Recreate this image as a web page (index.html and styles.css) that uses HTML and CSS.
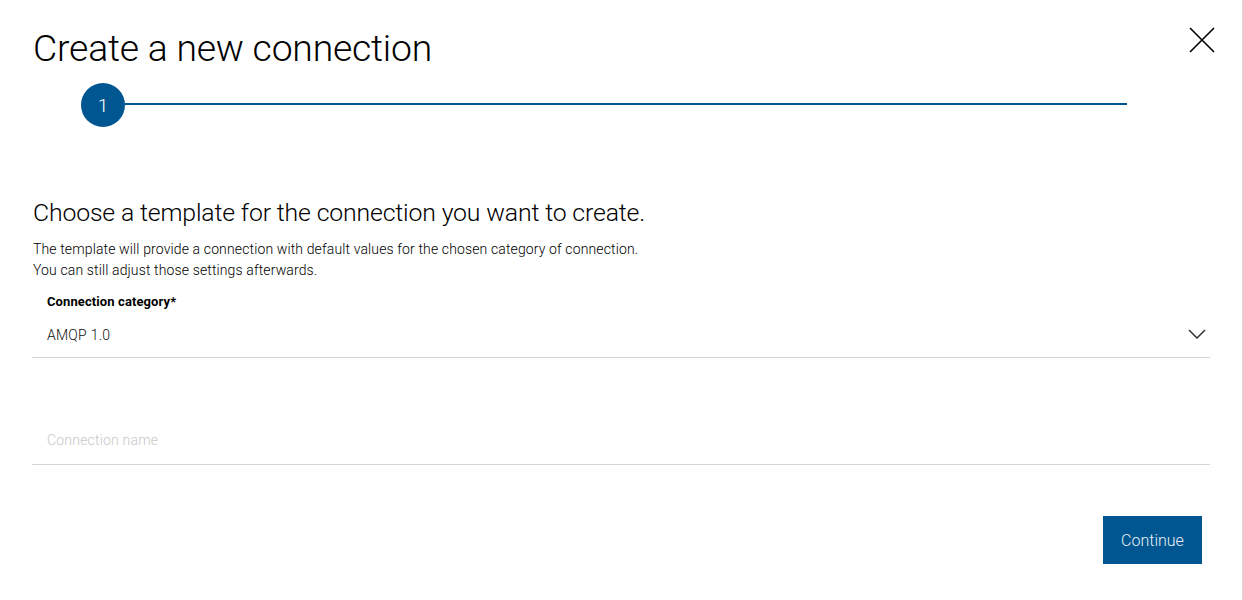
FILE: index.html
```html
<!DOCTYPE html>
<html lang="en">
<head>
<meta charset="utf-8">
<title>Create a new connection</title>
<link rel="stylesheet" href="styles.css">
</head>
<body>
<div class="dialog">
  <header class="dialog-header">
    <h1 class="title">Create a new connection</h1>
    <button class="close" aria-label="Close">
      <svg width="26" height="26" viewBox="0 0 26 26"><path d="M1 1 L25 25 M25 1 L1 25" stroke="#000" stroke-width="1.6" fill="none"/></svg>
    </button>
  </header>
  <div class="stepper">
    <div class="step-circle">1</div>
    <div class="step-line"></div>
  </div>
  <section class="content">
    <h2 class="subtitle">Choose a template for the connection you want to create.</h2>
    <p class="desc">The template will provide a connection with default values for the chosen category of connection.<br>You can still adjust those settings afterwards.</p>
    <div class="field select-field">
      <label class="field-label">Connection category*</label>
      <div class="field-row">
        <span class="field-value">AMQP 1.0</span>
        <svg class="chevron" width="18" height="10" viewBox="0 0 18 10"><path d="M1 1 L9 9 L17 1" stroke="#333" stroke-width="1.5" fill="none"/></svg>
      </div>
    </div>
    <div class="field name-field">
      <span class="placeholder">Connection name</span>
    </div>
    <div class="actions">
      <button class="btn-primary">Continue</button>
    </div>
  </section>
</div>
</body>
</html>
```
FILE: styles.css
```css
html, body { margin: 0; padding: 0; background: #fff; }
body { font-family: Roboto, "Noto Sans", sans-serif; color: #000; }
.dialog {
  width: 1243px;
  height: 600px;
  border-right: 1px solid #d8d8d8;
  box-sizing: border-box;
  padding: 0 0 0 32px;
}
.dialog-header {
  display: flex;
  justify-content: space-between;
  align-items: flex-start;
  padding-top: 26px;
}
.title {
  margin: 0 0 0 1px;
  font-weight: 300;
  font-size: 37.3px;
  line-height: 44px;
  letter-spacing: -0.2px;
}
.close {
  background: none;
  border: 0;
  padding: 0;
  margin: 1px 27px 0 0;
  width: 26px;
  height: 26px;
  cursor: pointer;
}
.close svg { display: block; }
.stepper {
  display: flex;
  align-items: center;
  margin-top: 13px;
  padding-left: 49px;
}
.step-circle {
  width: 44px;
  height: 44px;
  border-radius: 50%;
  background: #005691;
  color: #fff;
  font-weight: 300;
  font-size: 19px;
  display: flex;
  align-items: center;
  justify-content: center;
  flex: none;
}
.step-line {
  width: 1002px;
  height: 2px;
  background: #005691;
  margin-top: -2px;
}
.content { padding-top: 71px; width: 1178px; }
.subtitle {
  margin: 0 0 0 1px;
  font-weight: 300;
  font-size: 24.8px;
  line-height: 30px;
  letter-spacing: -0.15px;
}
.desc {
  margin: 11px 0 0 1px;
  font-size: 14px;
  font-weight: 300;
  line-height: 21px;
  letter-spacing: 0.13px;
}
.field { border-bottom: 1px solid #d4d4d4; padding-left: 15px; padding-right: 4px; }
.select-field { margin-top: 13px; }
.field-label {
  display: block;
  font-size: 13px;
  font-weight: 700;
  line-height: 16px;
  letter-spacing: 0.1px;
}
.field-row {
  display: flex;
  justify-content: space-between;
  align-items: center;
  height: 42px;
  padding-top: 4px;
  padding-bottom: 1px;
}
.field-value { font-size: 14px; font-weight: 300; color: #111; letter-spacing: 0.25px; }
.chevron { display: block; margin-top: -2px; }
.name-field {
  margin-top: 64px;
  height: 43px;
  display: flex;
  align-items: center;
  box-sizing: border-box;
  padding-bottom: 6px;
}
.placeholder { font-size: 14px; font-weight: 300; color: #c8c8c8; letter-spacing: 0.2px; }
.actions { display: flex; justify-content: flex-end; margin-top: 51px; padding-right: 8px; }
.btn-primary {
  background: #005691;
  color: #e8eef4;
  border: 0;
  width: 99px;
  height: 48px;
  font-family: Roboto, sans-serif;
  font-weight: 300;
  font-size: 16px;
  cursor: pointer;
}
```
